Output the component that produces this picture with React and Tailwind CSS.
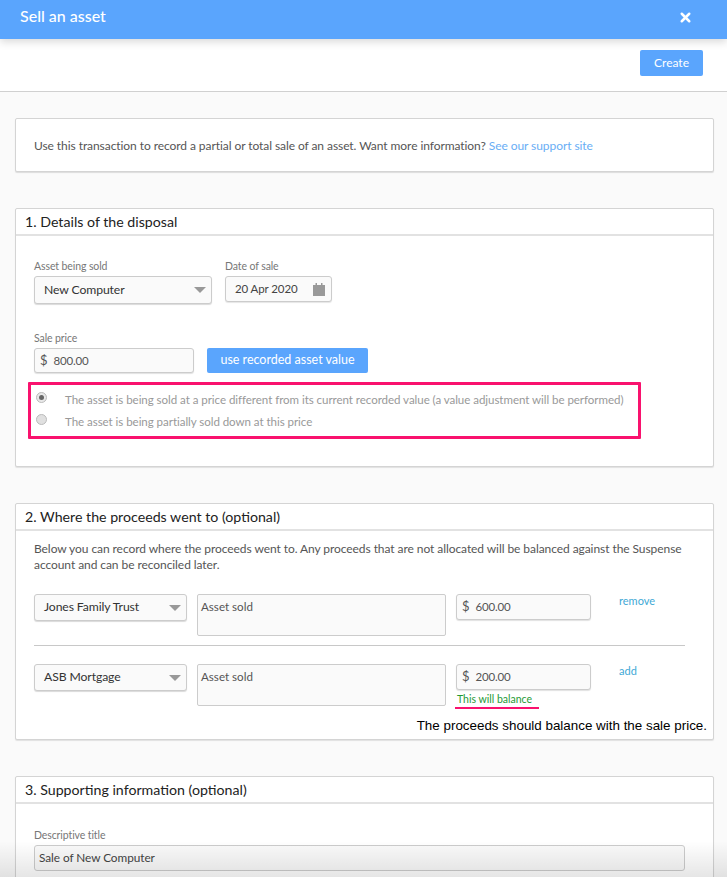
import { X } from 'lucide-react'

function Caret() {
  return <span className="w-0 h-0 border-x-[6px] border-x-transparent border-t-[6px] border-t-[#999]" />
}

function Select({ label, className }) {
  return (
    <div className={`flex items-center justify-between bg-[#fafafa] border border-[#ccc] rounded-[3px] shadow-[0_1px_1px_rgba(0,0,0,0.15)] pl-[9px] pr-[5px] text-[12.2px] tracking-[-0.1px] text-[#333] ${className}`}>
      <span>{label}</span>
      <Caret />
    </div>
  )
}

function Money({ value, className }) {
  return (
    <div className={`flex items-center gap-[6px] bg-[#fafafa] border border-[#ccc] rounded-[3px] shadow-[0_1px_1px_rgba(0,0,0,0.12)] pl-[5px] text-[#555] ${className}`}>
      <span className="text-[13px]">$</span>
      <span className="text-[11.5px] tracking-[-0.2px]">{value}</span>
    </div>
  )
}

function Label({ children }) {
  return <div className="text-[10.5px] tracking-[-0.1px] text-[#777] leading-[13px] mb-[3px]">{children}</div>
}

function Section({ title, className, children }) {
  return (
    <section className={`ml-[15px] mr-[13px] bg-white border border-[#d4d4d4] rounded-[2px] shadow-[0_1px_1px_rgba(0,0,0,0.1)] ${className}`}>
      <h2 className="h-[27px] pl-[9px] flex items-center text-[14.2px] text-[#222] border-b-2 border-[#e2e2e2]">{title}</h2>
      {children}
    </section>
  )
}

function ProceedRow({ account, amount, action, note }) {
  return (
    <div className="flex items-start">
      <Select label={account} className="w-[153px] h-[27px]" />
      <div className="w-[249px] h-[42px] ml-[10px] px-[3px] pt-[3px] bg-[#fafafa] border border-[#ccc] rounded-[2px] text-[11.6px] text-[#555]">Asset sold</div>
      <div className="ml-[10px]">
        <Money value={amount} className="w-[135px] h-[26px]" />
        {note}
      </div>
      <a className="ml-[28px] -mt-[1px] text-[11px] text-[#3fa9d6]">{action}</a>
    </div>
  )
}

export default function App() {
  return (
    <div className="relative h-[877px] overflow-hidden bg-[#fafafa] font-['Lato','Liberation_Sans',sans-serif]">
      <header className="relative h-[39px] bg-[#5aa5fd] flex items-center justify-between pl-[20px] pr-[34px] shadow-[0_3px_8px_rgba(0,0,0,0.15)]">
        <h1 className="text-[16px] font-medium text-white -mt-[8px]">Sell an asset</h1>
        <X size={15} strokeWidth={4} className="text-white -mt-[4px]" />
      </header>

      <div className="h-[53px] bg-white border-b border-[#d0d0d0] flex justify-end pt-[11px] pr-[24px]">
        <button className="w-[63px] h-[26px] bg-[#5aa5fd] text-white text-[12px] rounded-[2px]">Create</button>
      </div>

      <div className="mt-[26px] ml-[15px] mr-[13px] h-[54px] bg-white border border-[#d4d4d4] rounded-[2px] shadow-[0_1px_1px_rgba(0,0,0,0.12)] flex items-center pl-[18px] pt-[2px] text-[12px] tracking-[-0.07px] text-[#555]">
        <p>Use this transaction to record a partial or total sale of an asset. Want more information? <a className="text-[#69aef5]">See our support site</a></p>
      </div>

      <Section title="1. Details of the disposal" className="mt-[36px] h-[259px]">
        <div className="px-[18px] pt-[24px]">
          <div className="flex gap-[13px]">
            <div>
              <Label>Asset being sold</Label>
              <Select label="New Computer" className="w-[178px] h-[28px]" />
            </div>
            <div>
              <Label>Date of sale</Label>
              <div className="w-[107px] h-[26px] flex items-center justify-between bg-[#fafafa] border border-[#ccc] rounded-[3px] shadow-[0_1px_1px_rgba(0,0,0,0.1)] pl-[9px] pr-[6px] text-[11.5px] tracking-[-0.1px] text-[#444]">
                <span>20 Apr 2020</span>
                <svg width="12" height="13" viewBox="0 0 12 13" fill="#999">
                  <path d="M2.5 0h1.5v2H8V0h1.5v2H12v11H0V2h2.5z" />
                </svg>
              </div>
            </div>
          </div>

          <div className="mt-[28px]">
            <Label>Sale price</Label>
          </div>
          <div className="flex gap-[13px]">
            <Money value="800.00" className="w-[160px] h-[25px]" />
            <button className="w-[161px] h-[25px] bg-[#5aa5fd] text-white text-[12.5px] rounded-[2px]">use recorded asset value</button>
          </div>

          <div className="mt-[9px] -ml-[6px] w-[613px] h-[57px] border-[3px] border-[#f9126e] rounded-[1px] pl-[5px] pt-[7px] text-[11.55px] tracking-[-0.05px] text-[#999] flex flex-col gap-[7px] whitespace-nowrap">
            <label className="flex items-center gap-[18px] h-[15px]">
              <span className="w-[11px] h-[11px] rounded-full border border-[#bbb] bg-[#e8e8e8] flex items-center justify-center -mt-[5px]">
                <span className="w-[5px] h-[5px] rounded-full bg-[#666]" />
              </span>
              <span>The asset is being sold at a price different from its current recorded value (a value adjustment will be performed)</span>
            </label>
            <label className="flex items-center gap-[18px] h-[15px]">
              <span className="w-[11px] h-[11px] rounded-full border border-[#bbb] bg-[#e0e0e0] -mt-[5px]" />
              <span>The asset is being partially sold down at this price</span>
            </label>
          </div>
        </div>
      </Section>

      <Section title="2. Where the proceeds went to (optional)" className="relative mt-[36px] h-[237px]">
        <div className="px-[18px] pt-[10px]">
          <p className="text-[12px] tracking-[-0.07px] leading-[16px] text-[#555]">Below you can record where the proceeds went to. Any proceeds that are not allocated will be balanced against the Suspense account and can be reconciled later.</p>
          <div className="mt-[21px]">
            <ProceedRow account="Jones Family Trust" amount="600.00" action="remove" />
          </div>
          <div className="mt-[9px] mb-[18px] w-[651px] border-t border-[#c8c8c8]" />
          <ProceedRow
            account="ASB Mortgage"
            amount="200.00"
            action="add"
            note={(
              <div className="w-[84px] -ml-[1px] mt-[2px] pl-[2px] text-[10.5px] text-[#1f9a35] leading-[14px] border-b-2 border-[#f9126e] pb-[1px] whitespace-nowrap">This will balance</div>
            )}
          />
        </div>
        <p className="absolute right-[6px] bottom-[3px] font-['Liberation_Sans',sans-serif] text-[13.4px] text-black">The proceeds should balance with the sale price.</p>
      </Section>

      <Section title="3. Supporting information (optional)" className="mt-[36px] h-[200px]">
        <div className="px-[18px] pt-[25px]">
          <Label>Descriptive title</Label>
          <div className="w-[651px] h-[26px] flex items-center pl-[4px] bg-[#fafafa] border border-[#ccc] rounded-[3px] text-[11.8px] tracking-[-0.05px] text-[#444]">Sale of New Computer</div>
        </div>
      </Section>

      {/* bottom fade */}
      <div className="absolute left-0 right-0 bottom-0 h-[36px] bg-gradient-to-b from-transparent to-black/10" />
    </div>
  )
}
